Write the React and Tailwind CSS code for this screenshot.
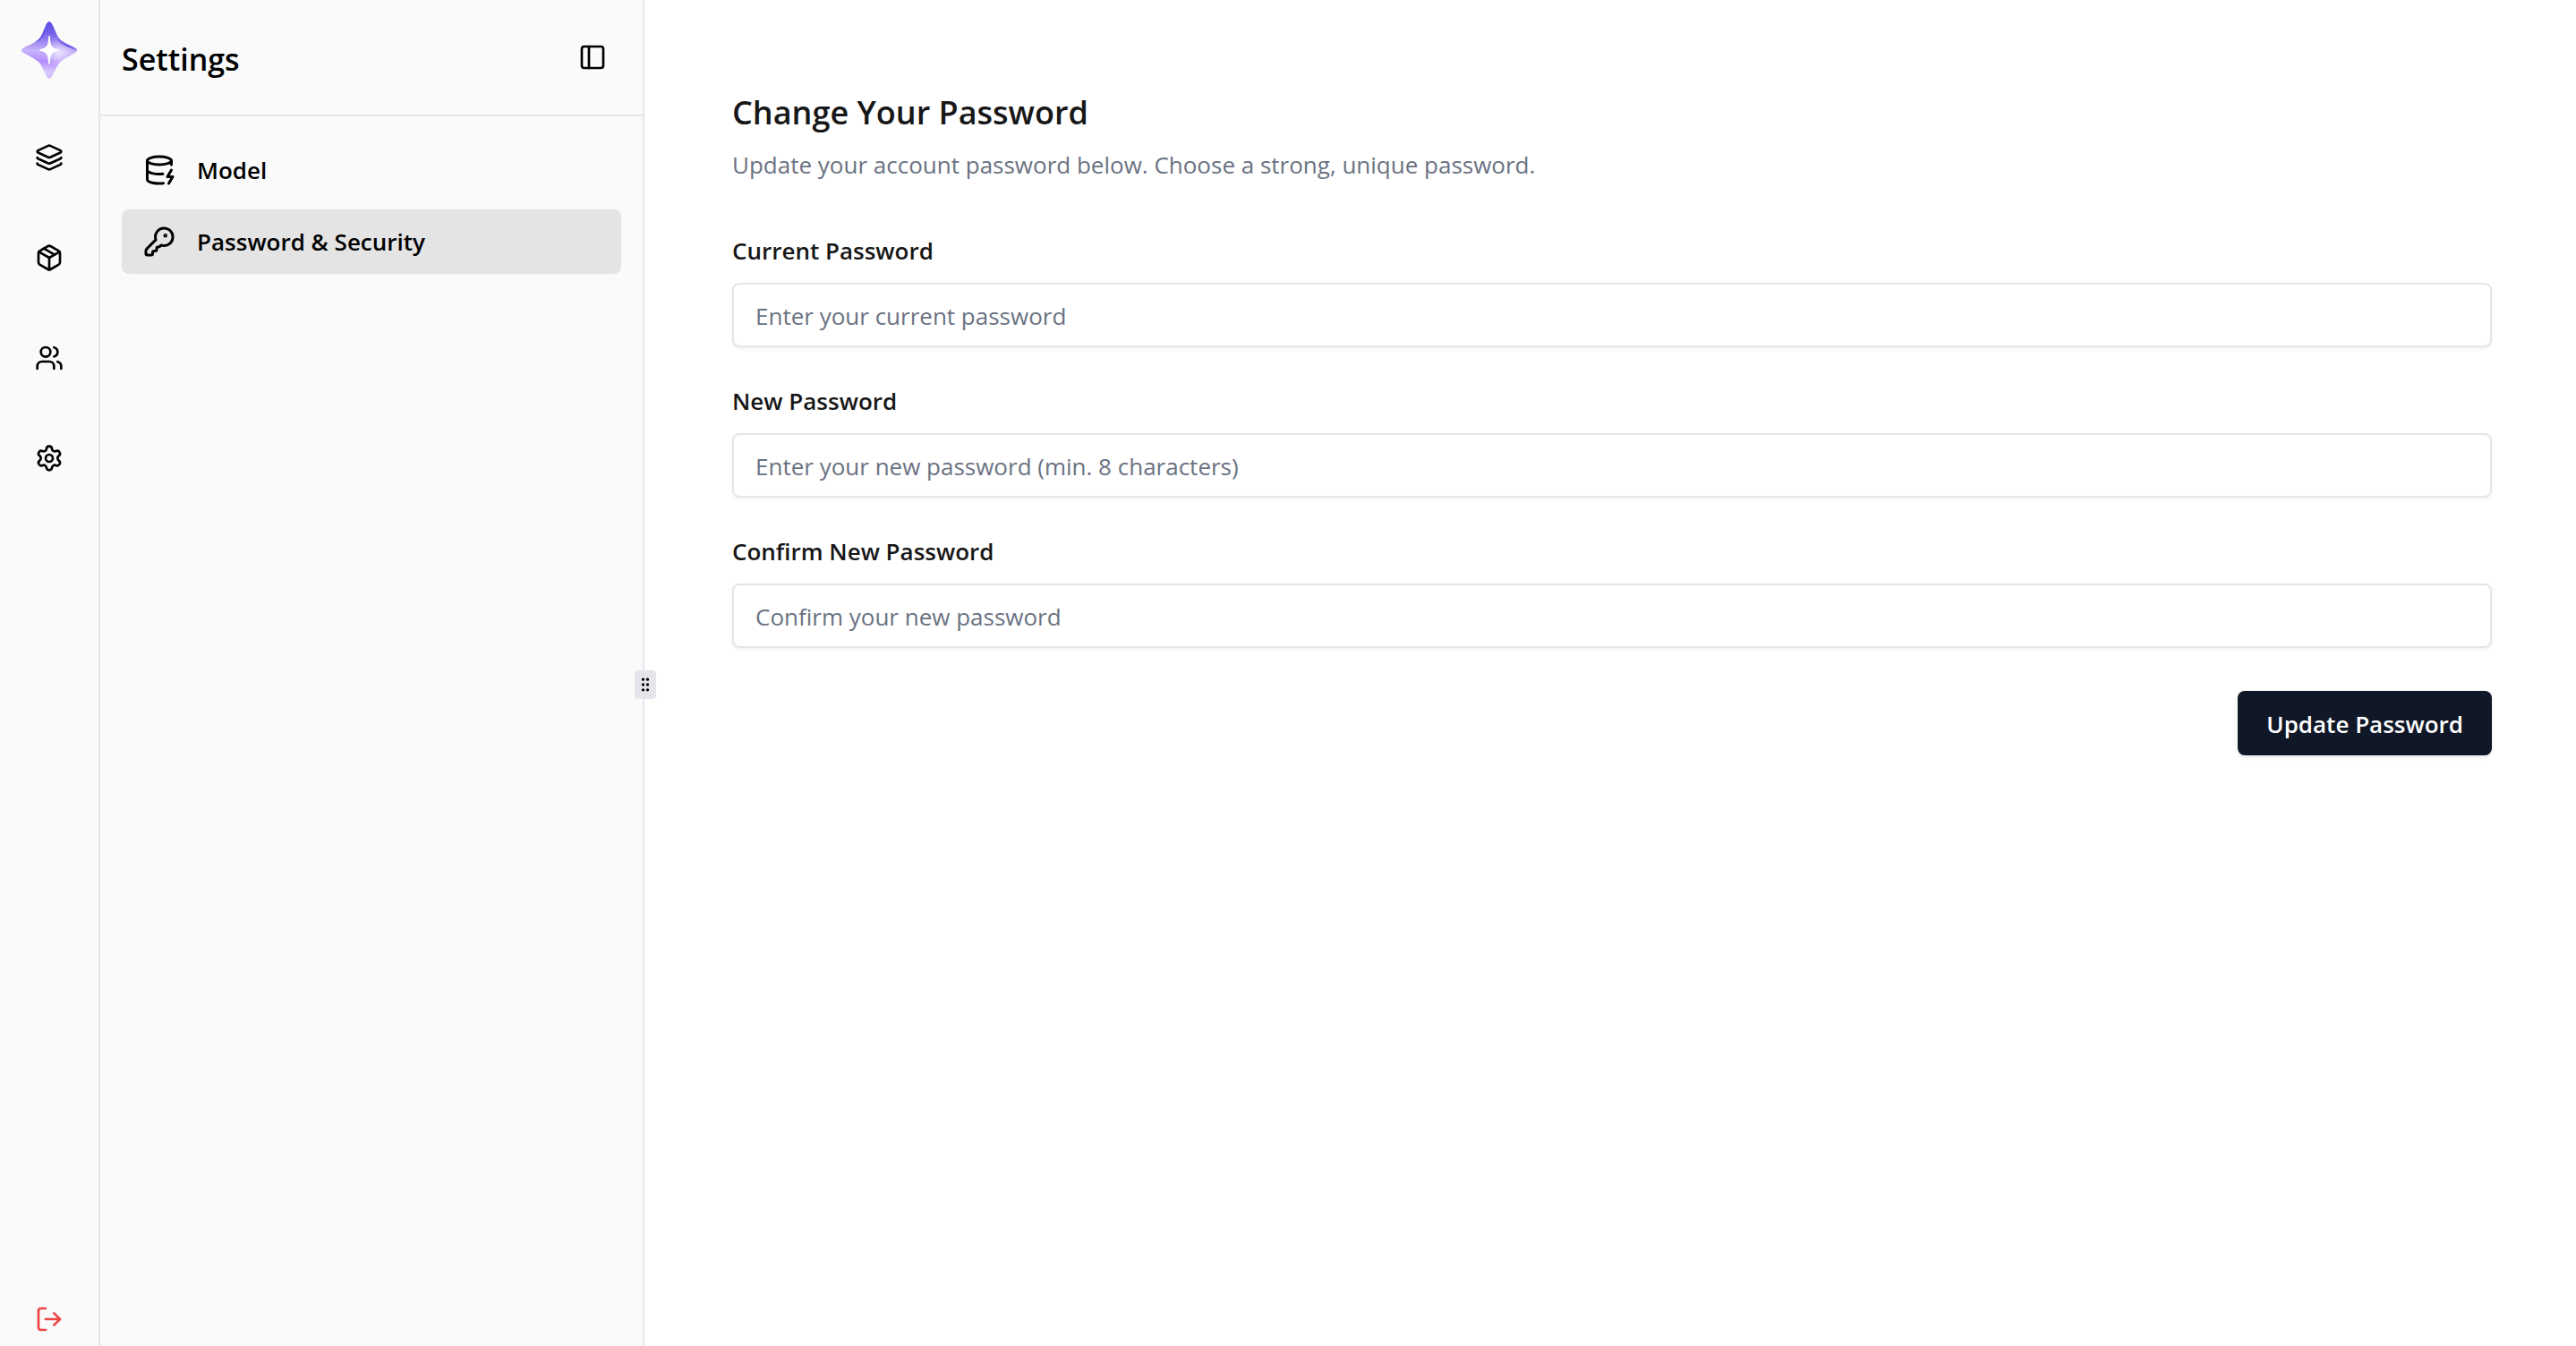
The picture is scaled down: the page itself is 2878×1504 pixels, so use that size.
import React from "react";
import {
  Layers,
  Package,
  Users,
  Settings,
  LogOut,
  PanelLeft,
  DatabaseZap,
  KeyRound,
  GripVertical,
} from "lucide-react";

const railItems = [
  { label: "Layers", Icon: Layers },
  { label: "Packages", Icon: Package },
  { label: "Users", Icon: Users },
  { label: "Settings", Icon: Settings },
];

const navItems = [
  { label: "Model", Icon: DatabaseZap, active: false },
  { label: "Password & Security", Icon: KeyRound, active: true },
];

const fields = [
  { id: "current", label: "Current Password", placeholder: "Enter your current password" },
  { id: "new", label: "New Password", placeholder: "Enter your new password (min. 8 characters)" },
  { id: "confirm", label: "Confirm New Password", placeholder: "Confirm your new password" },
];

const starPath =
  "M29 3.500Q32 -1.500 35 3.500C38 9 40.500 17.500 44.500 21.500C48.500 25 57 28 61.500 31Q64.500 33 61.500 35.500C56 39.500 48 42 44 46.500C40 51 38 57.500 35 62.500Q32 67 29 62.500C26 57 24.500 51 20.500 46.500C16 42 7.500 39 2.500 35.500Q-0.500 33 2.500 31C8 27.500 15.500 25.500 20 21C24.500 16.500 26 9 29 3.500Z";

function Logo() {
  return (
    <svg viewBox="0 0 64 66" className="h-[66px] w-16" aria-hidden="true">
      <defs>
        <linearGradient id="body" x1="0.5" y1="0" x2="0.45" y2="1">
          <stop offset="0" stopColor="#5b4be6" />
          <stop offset="0.2" stopColor="#7360e8" />
          <stop offset="0.38" stopColor="#a48df2" />
          <stop offset="0.52" stopColor="#c8b4fa" />
          <stop offset="0.7" stopColor="#b28cfb" />
          <stop offset="0.88" stopColor="#d9c8fd" />
          <stop offset="1" stopColor="#d2bdfb" />
        </linearGradient>
        <radialGradient id="shine" cx="0.68" cy="0.56" r="0.26">
          <stop offset="0" stopColor="#f1eaff" stopOpacity="0.85" />
          <stop offset="1" stopColor="#f1eaff" stopOpacity="0" />
        </radialGradient>
        <linearGradient id="edge" x1="0" y1="0" x2="1" y2="0">
          <stop offset="0" stopColor="#6a58e8" stopOpacity="0.3" />
          <stop offset="0.5" stopColor="#6350e2" />
          <stop offset="1" stopColor="#8f7af0" />
        </linearGradient>
      </defs>
      <path d={starPath} fill="url(#body)" />
      <path d={starPath} fill="url(#shine)" />
      <path d="M42 20C46 25 56 28 62.500 32.500C56 30.500 48 27.500 43.500 24Z" fill="url(#edge)" stroke="#6a58e8" strokeWidth="0.8" />
      <path d="M27 9C24.500 16 21.500 21.500 15.500 24.500C21 23.500 25 19.500 28 12Z" fill="#6553e4" />
      <path
        d="M31.200 17.500Q32 16 32.800 17.500C33.200 27 34 31 42.500 32.200Q43.500 33 42.500 33.800C34 35 33.200 39 32.800 48Q32 49.500 31.200 48C30.800 39 30 35 21.500 33.800Q20.500 33 21.500 32.200C30 31 30.800 27 31.200 17.500Z"
        fill="#fff"
      />
    </svg>
  );
}

export default function App() {
  return (
    <div className="flex min-h-screen bg-white font-['Open_Sans','Noto_Sans',sans-serif] text-[26px] leading-10 text-black">
      <aside className="flex w-28 shrink-0 flex-col items-center border-r-2 border-[#e5e5eb] bg-neutral-50 pt-[23px] pb-[14px]">
        <a href="#home" aria-label="Home">
          <Logo />
        </a>
        <nav className="mt-[63px] flex flex-col gap-16">
          {railItems.map(({ label, Icon }) => (
            <a key={label} href="#rail" aria-label={label} className="flex h-12 items-center">
              <Icon size={32} />
            </a>
          ))}
        </nav>
        <button type="button" aria-label="Log out" className="mt-auto text-[#ef4444]">
          <LogOut size={32} />
        </button>
      </aside>

      <section className="relative w-[608px] shrink-0 border-r-2 border-[#e5e5eb] bg-neutral-50">
        <header className="flex h-[130px] items-center justify-between border-b-2 border-[#e5e5eb] pr-10 pl-6">
          <h1 className="pt-1 text-[34px] font-semibold">Settings</h1>
          <button type="button" aria-label="Toggle sidebar">
            <PanelLeft size={32} />
          </button>
        </header>
        <nav className="flex flex-col gap-2 p-6">
          {navItems.map(({ label, Icon, active }) => (
            <a
              key={label}
              href="#section"
              className={
                active
                  ? "flex h-[72px] items-center gap-6 rounded-lg bg-[#e4e4e4] px-6 font-semibold"
                  : "flex h-[72px] items-center gap-6 rounded-lg px-6 font-semibold"
              }
            >
              <Icon size={36} />
              {label}
            </a>
          ))}
        </nav>
        <button
          type="button"
          aria-label="Resize panel"
          className="absolute top-[749px] -right-[15px] flex h-8 w-6 items-center justify-center rounded-sm bg-[#e5e5eb]"
        >
          <GripVertical size={20} />
        </button>
      </section>

      <main className="min-w-0 flex-1 pt-[98px] pr-[94px] pl-[98px] text-neutral-900">
        <h2 className="text-[36px] leading-14 font-semibold">Change Your Password</h2>
        <p className="mt-2.5 text-gray-500">Update your account password below. Choose a strong, unique password.</p>
        <form className="mt-[64px] flex flex-col gap-12" onSubmit={(e) => e.preventDefault()}>
          {fields.map(({ id, label, placeholder }) => (
            <div key={id} className="flex flex-col gap-6">
              <label htmlFor={id} className="leading-6 font-semibold">
                {label}
              </label>
              <input
                id={id}
                type="password"
                placeholder={placeholder}
                className="h-[72px] w-full rounded-lg border-2 border-[#e5e5eb] px-6 pt-0.5 shadow-[0_2px_4px_rgba(0,0,0,0.05)] placeholder:text-gray-500"
              />
            </div>
          ))}
          <button
            type="submit"
            className="flex h-[72px] items-center self-end rounded-lg bg-gray-900 px-8 pt-0.5 font-semibold text-white shadow-[0_2px_4px_rgba(0,0,0,0.1)]"
          >
            Update Password
          </button>
        </form>
      </main>
    </div>
  );
}
